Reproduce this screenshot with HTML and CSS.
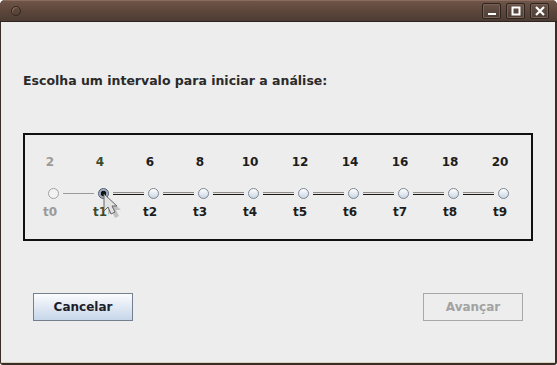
FILE: index.html
```html
<html lang="pt">
    <head>
        <meta charset="UTF-8">
        <title>Intervalo</title>
        <link rel="stylesheet" href="styles.css">
    </head>
    <body>
        <div class="window">
            <div class="titlebar">
                <span class="win-icon"></span>
                <div class="win-buttons">
                    <span class="wbtn"><svg width="10" height="10" viewBox="0 0 10 10"><rect x="1" y="7" width="8" height="2" fill="#fff"/></svg></span>
                    <span class="wbtn"><svg width="10" height="10" viewBox="0 0 10 10"><rect x="1.5" y="1.5" width="7" height="7" fill="none" stroke="#fff" stroke-width="2"/></svg></span>
                    <span class="wbtn"><svg width="10" height="10" viewBox="0 0 10 10"><path d="M1 1L9 9M9 1L1 9" stroke="#fff" stroke-width="2.2"/></svg></span>
                </div>
            </div>
            <div class="content">
                <p class="prompt">Escolha um intervalo para iniciar a análise:</p>
                <div class="range-box">
                    <div class="labels">
                        <span class="off">2</span>
                        <span class="sel">4</span>
                        <span>6</span>
                        <span>8</span>
                        <span>10</span>
                        <span>12</span>
                        <span>14</span>
                        <span>16</span>
                        <span>18</span>
                        <span>20</span>
                    </div>
                    <div class="track">
                        <span class="node off"></span>
                        <span class="link thin"></span>
                        <span class="node sel"></span>
                        <span class="link"></span>
                        <span class="node"></span>
                        <span class="link"></span>
                        <span class="node"></span>
                        <span class="link"></span>
                        <span class="node"></span>
                        <span class="link"></span>
                        <span class="node"></span>
                        <span class="link"></span>
                        <span class="node"></span>
                        <span class="link"></span>
                        <span class="node"></span>
                        <span class="link"></span>
                        <span class="node"></span>
                        <span class="link"></span>
                        <span class="node"></span>
                    </div>
                    <div class="labels names">
                        <span class="off">t0</span>
                        <span class="sel">t1</span>
                        <span>t2</span>
                        <span>t3</span>
                        <span>t4</span>
                        <span>t5</span>
                        <span>t6</span>
                        <span>t7</span>
                        <span>t8</span>
                        <span>t9</span>
                    </div>
                    <svg class="cursor" width="22" height="26" viewBox="0 0 22 26">
                        <path d="M3 3L3 20L7 16L10 23L14 21L11 15L16 15Z" fill="#8a8a8a" opacity="0.45" transform="translate(2 2)"/>
                        <path d="M1 1L1 18L5 14L8 21L12 19L9 13L14 13Z" fill="#e2e2e2" stroke="#666" stroke-width="1"/>
                    </svg>
                </div>
                <div class="actions">
                    <button type="button" class="btn">Cancelar</button>
                    <button type="button" class="btn" disabled>Avançar</button>
                </div>
            </div>
        </div>
    </body>
</html>
```

FILE: styles.css
```css
* {
    margin: 0;
    padding: 0;
    box-sizing: border-box;
    font-family: "DejaVu Sans", "Liberation Sans", sans-serif;
}

body {
    background: #ffffff;
}

.window {
    width: 557px;
    height: 365px;
    display: flex;
    flex-direction: column;
    background: #3a2d27;
    border-radius: 5px 5px 3px 3px;
    overflow: hidden;
}

.titlebar {
    height: 22px;
    display: flex;
    align-items: center;
    padding: 0 8px 0 10px;
    background: linear-gradient(#6f5447, #5d463b 50%, #4c3c34);
    border-top: 1px solid #8a6d60;
    border-bottom: 1px solid #2e231e;
}

.win-icon {
    width: 10px;
    height: 10px;
    margin-left: 1px;
    border-radius: 50%;
    border: 1px solid #32271f;
    box-shadow: 1px 1px 0 #86695b inset;
}

.win-buttons {
    margin-left: auto;
    display: flex;
    gap: 5px;
}

.wbtn {
    width: 19px;
    height: 16px;
    display: flex;
    align-items: center;
    justify-content: center;
    border: 1px solid #2d231f;
    border-radius: 2px;
    background: linear-gradient(#6a5246, #4e3d35);
    box-shadow: 0 0 0 1px #7a6155 inset;
}

.content {
    flex: 1;
    margin: 0 2px 2px 1px;
    background: #ededed;
    border-bottom: 1px solid #d8d0bc;
    padding: 51px 0 0 22px;
}

.prompt {
    font-size: 12.5px;
    line-height: 16px;
    font-weight: bold;
    color: #2a2a2a;
}

.range-box {
    position: relative;
    width: 510px;
    height: 108px;
    margin-top: 44px;
    border: 2px solid #111;
    padding: 20px 0 0 0;
}

.labels {
    display: grid;
    grid-template-columns: repeat(10, 50px);
    font-size: 12px;
    line-height: 14px;
    font-weight: bold;
    color: #1c1c1c;
    text-align: center;
}

.labels.names {
    margin-top: 6px;
}

.labels .off {
    color: #9a9a9a;
}

.labels .sel {
    color: #3c4a2c;
}

.track {
    display: flex;
    align-items: center;
    height: 11px;
    margin-top: 19px;
    padding-left: 23px;
}

.node {
    width: 11px;
    height: 11px;
    flex: none;
    border-radius: 50%;
    border: 1px solid #7d8894;
    background: linear-gradient(#ffffff, #c9d5e3);
}

.node.off {
    border-color: #a2a2a2;
    background: #f2f2f2;
}

.node.sel {
    border: 1px solid #4f5a66;
    background: radial-gradient(circle, #111 0 2.5px, #8ea0b4 3px, #b5c3d2 5px);
}

.link {
    width: 31px;
    height: 3px;
    margin: 0 4px;
    border-top: 1px solid #8c8c8c;
    border-bottom: 1px solid #1e1610;
    background: #e4e4e4;
}

.link.thin {
    height: 1px;
    border: 0;
    background: #9a9a9a;
}

.cursor {
    position: absolute;
    left: 78px;
    top: 58px;
}

.actions {
    display: flex;
    justify-content: space-between;
    width: 490px;
    margin: 52px 0 0 10px;
}

.btn {
    width: 100px;
    height: 28px;
    font-size: 12px;
    font-weight: bold;
    color: #1e1e2a;
    border: 1px solid #74808e;
    background: linear-gradient(#fbfcfe, #c6d6e9);
}

.btn:disabled {
    color: #a2a2a2;
    border-color: #a8a8a8;
    background: #ededed;
}
```
